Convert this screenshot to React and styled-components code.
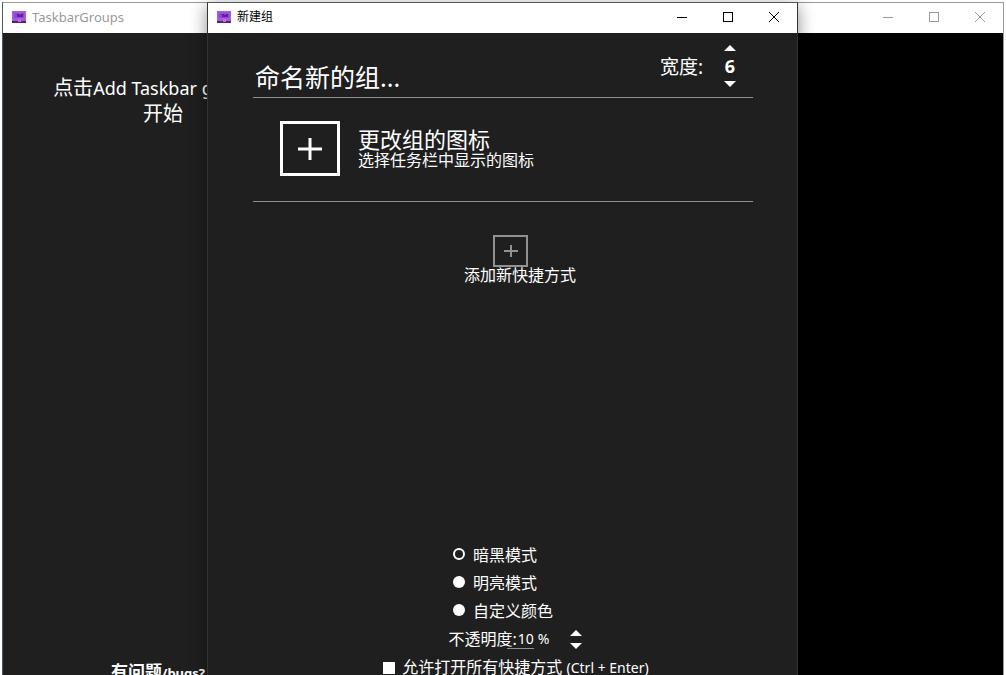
import React, { useState } from 'react';
import styled, { createGlobalStyle } from 'styled-components';

const GlobalStyle = createGlobalStyle`
  * {
    box-sizing: border-box;
  }

  body {
    margin: 0;
    background: #fff;
    font-family: 'Noto Sans', 'Noto Sans CJK SC', sans-serif;
  }

  button, input {
    font-family: inherit;
    color: inherit;
  }
`;

// Desktop area, both windows run past its lower edge
const Desktop = styled.div`
  position: relative;
  height: 100vh;
  overflow: hidden;
  padding: 2px 2px 0;
`;

// Main window behind the dialog
const MainWindow = styled.div`
  display: flex;
  flex-direction: column;
  height: 100%;
  border: 1px solid #999;
  border-bottom: 0;
  border-left-color: #4a5a64;
`;

const TitleBar = styled.header`
  display: flex;
  align-items: center;
  flex: none;
  height: 30px;
  padding: 0 0 2px 9px;
  background: #fff;
  color: ${({ $active }) => ($active ? '#000' : '#999')};
`;

const Title = styled.h1`
  flex: 1;
  margin: 0 0 0 6px;
  font-size: ${({ $size }) => $size}px;
  line-height: 20px;
  font-weight: 400;
`;

const WindowButton = styled.button`
  display: flex;
  align-items: center;
  justify-content: center;
  width: 46px;
  height: 28px;
  padding: 0;
  border: 0;
  background: none;
`;

const MainBody = styled.div`
  display: flex;
  flex: 1;
  min-height: 0;
  background: #000;
`;

const Sidebar = styled.aside`
  display: flex;
  flex-direction: column;
  justify-content: space-between;
  width: 320px;
  padding-top: 42px;
  background: #1f1f1f;
  color: #fff;
`;

const Hint = styled.p`
  margin: 0;
  font-size: 20px;
  line-height: 26px;
  text-align: center;
`;

const HintLatin = styled.span`
  font-size: 18px;
`;

const HelpTitle = styled.h2`
  margin: 0 0 -10px;
  padding-left: 108px;
  font-size: 17px;
  line-height: 24px;
  font-weight: 700;
`;

const HelpLatin = styled.span`
  font-size: 13px;
`;

// Dialog floating over the main window
const Dialog = styled.section`
  position: absolute;
  top: 2px;
  bottom: 0;
  left: 207px;
  right: 208px;
  border: 1px solid #555;
  border-color: #555 #333 #333;
  border-bottom: 0;
  background: #1f1f1f;
  color: #fff;
  box-shadow: 0 4px 16px rgba(0, 0, 0, 0.45);
`;

const Form = styled.form`
  padding: 0 44px 0 45px;
`;

const NameRow = styled.div`
  display: flex;
  align-items: flex-end;
  justify-content: space-between;
  height: 65px;
  border-bottom: 1px solid #919191;
`;

const NameInput = styled.input`
  flex: 1;
  min-width: 0;
  height: 42px;
  padding: 0 0 0 2px;
  border: 0;
  outline: 0;
  background: none;
  font-size: 25px;
`;

const WidthField = styled.div`
  display: flex;
  align-items: center;
  align-self: stretch;
  gap: 20px;
  padding: 8px 16px 6px 0;
  font-size: 19px;
`;

const Stepper = styled.div`
  display: flex;
  flex-direction: column;
  align-items: center;
  gap: ${({ $gap }) => $gap || 0}px;
`;

const StepButton = styled.button`
  display: flex;
  align-items: center;
  justify-content: center;
  width: 14px;
  height: 8px;
  padding: 0;
  border: 0;
  background: none;
`;

const WidthValue = styled.output`
  font-size: 18px;
  line-height: 28px;
  font-weight: 700;
`;

const IconRow = styled.div`
  display: flex;
  align-items: flex-start;
  gap: 18px;
  height: 104px;
  padding: 23px 0 0 27px;
  border-bottom: 1px solid #919191;
`;

const IconButton = styled.button`
  display: flex;
  align-items: center;
  justify-content: center;
  width: 60px;
  height: 55px;
  padding: 0;
  border: 3px solid #fff;
  background: none;
`;

const IconText = styled.div`
  padding-top: 6px;
`;

const IconTitle = styled.h2`
  margin: 0;
  font-size: 22px;
  line-height: 24px;
  font-weight: 400;
`;

const IconHint = styled.p`
  margin: 0;
  font-size: 16px;
  line-height: 18px;
`;

const ShortcutButton = styled.button`
  display: flex;
  flex-direction: column;
  align-items: center;
  margin: 33px auto 0;
  padding: 0 0 0 16px;
  border: 0;
  background: none;
`;

const ShortcutBox = styled.span`
  display: flex;
  align-items: center;
  justify-content: center;
  width: 35px;
  height: 32px;
  border: 2px solid #919191;
`;

const ShortcutLabel = styled.span`
  padding-left: 18px;
  font-size: 16px;
  line-height: 16px;
`;

const Settings = styled.div`
  display: flex;
  flex-direction: column;
  align-items: center;
  margin-top: 258px;
  padding-left: 26px;
  font-size: 16px;
  line-height: 28px;
`;

const ModeList = styled.fieldset`
  width: 126px;
  margin: 0;
  padding: 0;
  border: 0;
`;

const Choice = styled.label`
  display: flex;
  align-items: center;
  gap: ${({ $gap }) => $gap}px;
  white-space: nowrap;
`;

const Radio = styled.input`
  appearance: none;
  flex: none;
  width: 12px;
  height: 12px;
  margin: 0 0 2px;
  border-radius: 50%;
  background: #fff;

  &:checked {
    border: 2px solid #fff;
    background: #1f1f1f;
  }
`;

const OpacityRow = styled.div`
  display: flex;
  align-items: center;
  height: 28px;
`;

// The underline of the field starts under the label's last character
const OpacityInput = styled.input`
  width: 27px;
  height: 20px;
  margin-left: -10px;
  padding: 0;
  border: 0;
  border-bottom: 1px solid #919191;
  outline: 0;
  background: none;
  font-size: 14px;
  text-align: right;
`;

const Percent = styled.span`
  margin: 0 20px 0 4px;
  font-size: 14px;
`;

const CheckBox = styled.input`
  appearance: none;
  flex: none;
  width: 12px;
  height: 12px;
  margin: 0;
  background: #fff;

  &:checked {
    border: 3px solid #fff;
    background: #1f1f1f;
  }
`;

const ChoiceLatin = styled.span`
  font-size: 14px;
`;

const AppIcon = () => (
  <svg width="14" height="12" viewBox="0 0 14 12">
    <rect width="14" height="12" fill="#a35ae0" />
    <rect x="2" y="2" width="10" height="5" fill="#8f48d4" />
    <rect x="5" y="3" width="6" height="3" fill="#5b2496" />
    <rect x="7" y="3" width="2" height="1" fill="#8a3fd0" />
    <rect y="10" width="14" height="2" fill="#4a2a66" />
    <rect x="6" y="8" width="3" height="3" fill="#e558ee" />
  </svg>
);

const Plus = ({ size, stroke, color }) => (
  <svg width={size} height={size} viewBox={`0 0 ${size} ${size}`}>
    <path d={`M0 ${size / 2}H${size}M${size / 2} 1V${size - 1}`} stroke={color} strokeWidth={stroke} />
  </svg>
);

const Arrow = ({ down }) => (
  <svg width="12" height="6" viewBox="0 0 12 6">
    <path d={down ? 'M0 0H12L6 6Z' : 'M0 6H12L6 0Z'} fill="#fff" />
  </svg>
);

const WindowControls = () => (
  <>
    <WindowButton aria-label="Minimize">
      <svg width="10" height="10" viewBox="0 0 10 10">
        <path d="M0 5.5H10" stroke="currentColor" />
      </svg>
    </WindowButton>
    <WindowButton aria-label="Maximize">
      <svg width="10" height="10" viewBox="0 0 10 10">
        <rect x="0.5" y="0.5" width="9" height="9" fill="none" stroke="currentColor" />
      </svg>
    </WindowButton>
    <WindowButton aria-label="Close">
      <svg width="10" height="10" viewBox="0 0 10 10">
        <path d="M0 0L10 10M10 0L0 10" stroke="currentColor" />
      </svg>
    </WindowButton>
  </>
);

const MODES = [
  { id: 'dark', label: '暗黑模式' },
  { id: 'light', label: '明亮模式' },
  { id: 'custom', label: '自定义颜色' },
];

const App = () => {
  const [name, setName] = useState('命名新的组...');
  const [width, setWidth] = useState(6);
  const [mode, setMode] = useState('dark');
  const [opacity, setOpacity] = useState(10);
  const [openAll, setOpenAll] = useState(false);

  return (
    <>
      <GlobalStyle />
      <Desktop>
        <MainWindow>
          <TitleBar>
            <AppIcon />
            <Title $size={13}>TaskbarGroups</Title>
            <WindowControls />
          </TitleBar>
          <MainBody>
            <Sidebar>
              <Hint>
                点击<HintLatin>Add Taskbar group</HintLatin>来
                <br />
                开始
              </Hint>
              <HelpTitle>
                有问题<HelpLatin>/bugs?</HelpLatin>
              </HelpTitle>
            </Sidebar>
          </MainBody>
        </MainWindow>

        <Dialog>
          <TitleBar $active>
            <AppIcon />
            <Title as="h2" $size={12}>新建组</Title>
            <WindowControls />
          </TitleBar>
          <Form onSubmit={(e) => e.preventDefault()}>
            <NameRow>
              <NameInput aria-label="命名新的组" value={name} onChange={(e) => setName(e.target.value)} />
              <WidthField>
                <label htmlFor="width">宽度:</label>
                <Stepper>
                  <StepButton type="button" aria-label="+" onClick={() => setWidth(width + 1)}>
                    <Arrow />
                  </StepButton>
                  <WidthValue id="width">{width}</WidthValue>
                  <StepButton type="button" aria-label="-" onClick={() => setWidth(width - 1)}>
                    <Arrow down />
                  </StepButton>
                </Stepper>
              </WidthField>
            </NameRow>

            <IconRow>
              <IconButton type="button" aria-label="更改组的图标">
                <Plus size={24} stroke={3} color="#fff" />
              </IconButton>
              <IconText>
                <IconTitle>更改组的图标</IconTitle>
                <IconHint>选择任务栏中显示的图标</IconHint>
              </IconText>
            </IconRow>

            <ShortcutButton type="button">
              <ShortcutBox>
                <Plus size={14} stroke={2} color="#919191" />
              </ShortcutBox>
              <ShortcutLabel>添加新快捷方式</ShortcutLabel>
            </ShortcutButton>

            <Settings>
              <ModeList>
                {MODES.map(({ id, label }) => (
                  <Choice key={id} $gap={8}>
                    <Radio type="radio" name="mode" checked={mode === id} onChange={() => setMode(id)} />
                    {label}
                  </Choice>
                ))}
              </ModeList>
              <OpacityRow>
                <label htmlFor="opacity">不透明度:</label>
                <OpacityInput id="opacity" value={opacity} onChange={(e) => setOpacity(Number(e.target.value) || 0)} />
                <Percent>%</Percent>
                <Stepper $gap={5}>
                  <StepButton type="button" aria-label="+" onClick={() => setOpacity(opacity + 10)}>
                    <Arrow />
                  </StepButton>
                  <StepButton type="button" aria-label="-" onClick={() => setOpacity(opacity - 10)}>
                    <Arrow down />
                  </StepButton>
                </Stepper>
              </OpacityRow>
              <Choice $gap={7}>
                <CheckBox type="checkbox" checked={openAll} onChange={(e) => setOpenAll(e.target.checked)} />
                <span>
                  允许打开所有快捷方式 <ChoiceLatin>(Ctrl + Enter)</ChoiceLatin>
                </span>
              </Choice>
            </Settings>
          </Form>
        </Dialog>
      </Desktop>
    </>
  );
};

export default App;
